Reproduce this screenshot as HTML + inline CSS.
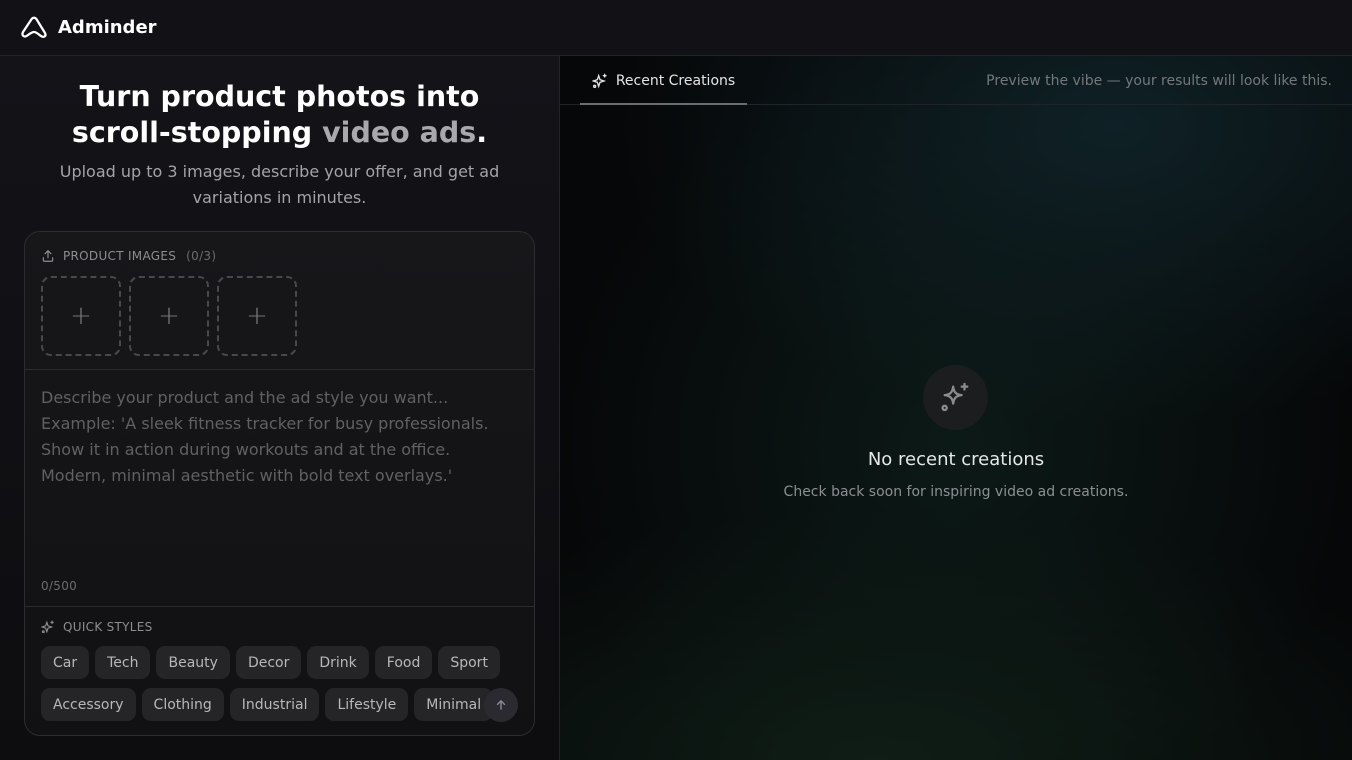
<!DOCTYPE html>
<html><head><meta charset="utf-8"><style>
*{box-sizing:border-box;margin:0;padding:0}
body{width:1352px;height:760px;overflow:hidden;background:#0b0b0e;font-family:"DejaVu Sans","Liberation Sans",sans-serif;color:#eee;position:relative}
.hdr{position:absolute;left:0;top:0;width:1352px;height:56px;border-bottom:1px solid #23242a;background:#111116;display:flex;align-items:center;padding-left:20px}
.hdr b{font-size:18px;color:#fff;margin-left:10px}
.left{position:absolute;left:0;top:56px;width:560px;height:704px;background:linear-gradient(180deg,#131318,#0d0d10);border-right:1px solid #23242a}
h1{position:absolute;top:23px;left:0;width:559px;text-align:center;font-size:28.5px;line-height:36px;font-weight:bold;color:#fff}
h1 span{color:#a9a9ad}
.sub{position:absolute;top:103px;left:40px;width:479px;text-align:center;font-size:16px;line-height:26px;color:#a3a3a8}
.card{position:absolute;left:24px;top:175px;width:511px;height:505px;border:1px solid #2c2c31;border-radius:16px;background:linear-gradient(180deg,#17171a,#111113);overflow:hidden}
.lab{position:absolute;left:16px;font-size:12px;color:#8d8d92;letter-spacing:.3px;display:flex;align-items:center;gap:8px}
.box{position:absolute;top:44px;width:80px;height:80px;border:2px dashed #48484d;border-radius:10px;color:#77777c;font-size:26px;font-weight:200;display:flex;align-items:center;justify-content:center}
.hr{position:absolute;left:0;width:511px;height:1px;background:#2a2a2f}
.ta{position:absolute;left:16px;top:153px;font-size:16px;line-height:26px;color:#606065;width:462px}
.chips{position:absolute;left:16px;top:414px;width:470px;display:flex;flex-wrap:wrap;gap:9px 6px}
.chip{height:33px;padding:2px 12px 0;background:#252528;border-radius:9px;font-size:14px;line-height:31px;color:#b8b8bc}
.up{position:absolute;left:459px;top:456px;width:34px;height:34px;border-radius:50%;background:#2a2a30;display:flex;align-items:center;justify-content:center}
.right{position:absolute;left:560px;top:56px;width:792px;height:704px;background:radial-gradient(ellipse 500px 300px at 70% 10%,#0f2126,transparent),radial-gradient(ellipse 600px 250px at 40% 100%,#0f1d16,transparent),radial-gradient(ellipse 400px 400px at 50% 55%,#0c1a17,transparent),#060708}
.tabs{position:absolute;left:0;top:0;width:792px;height:49px;border-bottom:1px solid #1e2428}
.tab{position:absolute;left:20px;top:0;width:167px;height:49px;padding-top:2px;border-bottom:2px solid #6a6e72;display:flex;align-items:center;justify-content:center;gap:8px;font-size:14px;color:#e4e4e6}
.prev{position:absolute;right:20px;top:17px;font-size:14px;color:#74787c}
.circ{position:absolute;left:363px;top:309px;width:65px;height:65px;border-radius:50%;background:#1b1d1f;display:flex;align-items:center;justify-content:center}
.nr{position:absolute;left:0;width:792px;text-align:center}
</style></head><body>
<div class="hdr"><svg width="28" height="28" viewBox="0 0 28 28" fill="none" stroke="#fff" stroke-width="2.3" stroke-linecap="round" stroke-linejoin="round"><path d="M11 6c1.5-3 4.5-3 6 0l8 13c1.5 3-1 5-4 3-2.5-1.5-4.5-4-7-4s-5 2.5-7.5 4C3.5 23.5 1.5 21 3 18z"/></svg><b>Adminder</b></div>
<div class="left">
<h1>Turn product photos into<br>scroll-stopping <span>video ads</span>.</h1>
<div class="sub">Upload up to 3 images, describe your offer, and get ad variations in minutes.</div>
<div class="card">
<div class="lab" style="top:17px"><svg width="14" height="14" viewBox="0 0 24 24" fill="none" stroke="#8d8d92" stroke-width="2" stroke-linecap="round"><path d="M12 15V3M7 8l5-5 5 5M4 15v4a2 2 0 0 0 2 2h12a2 2 0 0 0 2-2v-4"/></svg>PRODUCT IMAGES <span style="color:#6b6b70;margin-left:2px">(0/3)</span></div>
<div class="box" style="left:16px">+</div><div class="box" style="left:104px">+</div><div class="box" style="left:192px">+</div>
<div class="hr" style="top:137px"></div>
<div class="ta">Describe your product and the ad style you want... Example: 'A sleek fitness tracker for busy professionals. Show it in action during workouts and at the office. Modern, minimal aesthetic with bold text overlays.'</div>
<div class="lab" style="top:347px;font-size:12px;color:#6b6b70">0/500</div>
<div class="hr" style="top:374px"></div>
<div class="lab" style="top:388px"><svg width="14" height="14" viewBox="0 0 24 24" fill="none" stroke="#8d8d92" stroke-width="2" stroke-linecap="round"><path d="M10 4l2 6 6 2-6 2-2 6-2-6-6-2 6-2z"/><path d="M19 2v4M17 4h4"/><circle cx="4" cy="20" r="1.5"/></svg>QUICK STYLES</div>
<div class="chips"><span class="chip">Car</span><span class="chip">Tech</span><span class="chip">Beauty</span><span class="chip">Decor</span><span class="chip">Drink</span><span class="chip">Food</span><span class="chip">Sport</span><span class="chip">Accessory</span><span class="chip">Clothing</span><span class="chip">Industrial</span><span class="chip">Lifestyle</span><span class="chip">Minimal</span></div>
<div class="up"><svg width="14" height="14" viewBox="0 0 24 24" fill="none" stroke="#8a8aa0" stroke-width="2.4" stroke-linecap="round"><path d="M12 19V5M6 11l6-6 6 6"/></svg></div>
</div>
</div>
<div class="right">
<div class="tabs"><div class="tab"><svg width="16" height="16" viewBox="0 0 24 24" fill="none" stroke="#e4e4e6" stroke-width="2" stroke-linecap="round"><path d="M10 4l2 6 6 2-6 2-2 6-2-6-6-2 6-2z"/><path d="M19 2v4M17 4h4"/><circle cx="4" cy="20" r="1.5"/></svg>Recent Creations</div><div class="prev">Preview the vibe — your results will look like this.</div></div>
<div class="circ"><svg width="34" height="34" viewBox="0 0 24 24" fill="none" stroke="#8a8c8e" stroke-width="1.6" stroke-linecap="round" stroke-linejoin="round"><path d="M10 4c.5 4 2 5.5 6 6-4 .5-5.5 2-6 6-.5-4-2-5.5-6-6 4-.5 5.5-2 6-6z"/><path d="M18 2v4M16 4h4"/><circle cx="4" cy="19" r="1.5"/></svg></div>
<div class="nr" style="top:393px;font-size:18px;color:#e6e6e8">No recent creations</div>
<div class="nr" style="top:428px;font-size:14px;color:#8b8f93">Check back soon for inspiring video ad creations.</div>
</div>
</body></html>
